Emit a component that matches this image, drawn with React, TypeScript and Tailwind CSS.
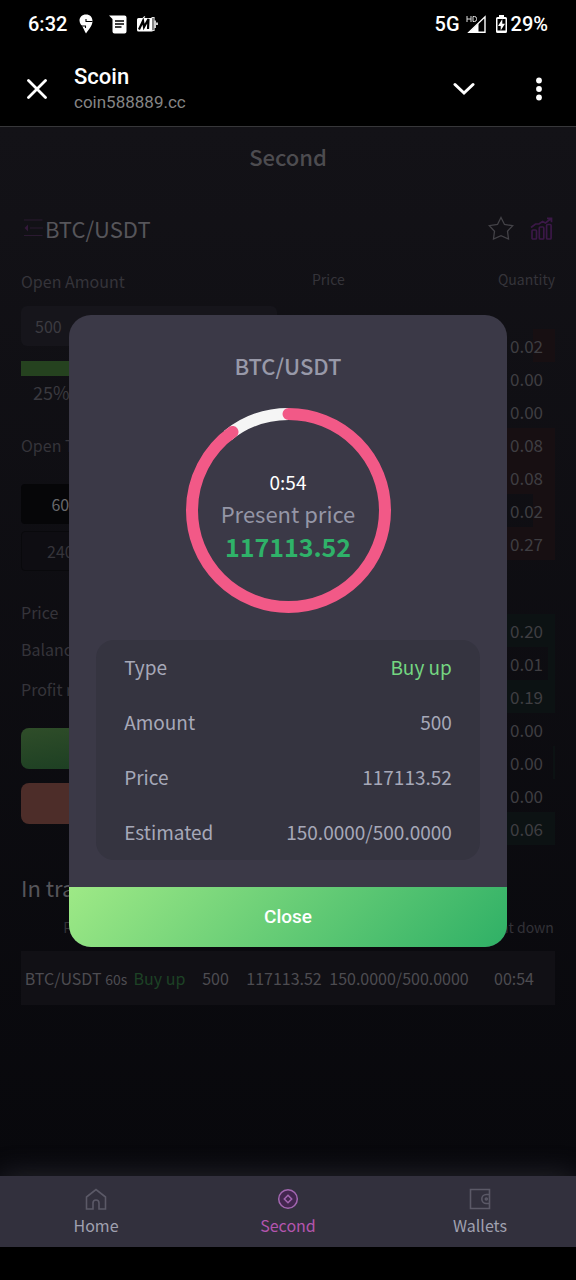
import React from "react";

type Level = { qty: string; depth: number };

const asks: Level[] = [
  { qty: "0.02", depth: 22 },
  { qty: "0.00", depth: 0 },
  { qty: "0.00", depth: 0 },
  { qty: "0.08", depth: 90 },
  { qty: "0.08", depth: 90 },
  { qty: "0.02", depth: 22 },
  { qty: "0.27", depth: 240 },
];

const bids: Level[] = [
  { qty: "0.20", depth: 200 },
  { qty: "0.01", depth: 7 },
  { qty: "0.19", depth: 190 },
  { qty: "0.00", depth: 0 },
  { qty: "0.00", depth: 2 },
  { qty: "0.00", depth: 0 },
  { qty: "0.06", depth: 60 },
];

const details = [
  { label: "Type", value: "Buy up", tone: "text-[#74d681]" },
  { label: "Amount", value: "500", tone: "text-[#a6a8b8]" },
  { label: "Price", value: "117113.52", tone: "text-[#a6a8b8]" },
  { label: "Estimated", value: "150.0000/500.0000", tone: "text-[#a6a8b8]" },
];

function StatusBar() {
  return (
    <div className="flex h-12 items-center justify-between px-7 font-[Roboto,sans-serif] text-[20px] leading-6 font-medium text-white">
      <div className="flex items-center">
        <span>6:32</span>
        <svg className="ml-3 h-5 w-3.5" viewBox="0 0 14 20" aria-hidden="true">
          <path d="M7 .5C3 .5.5 3.200.5 6.500c0 3 2 4.500 3.200 6.500 1 1.800 1.800 4 3.300 6.500 3-4.500 6.500-8 6.500-12.500C13.500 3.200 11 .5 7 .5z" fill="#fff" />
          <path d="M7 5v2.500h6.500M1.500 12h5v2" fill="none" stroke="#000" strokeWidth="1.100" />
        </svg>
        <svg className="ml-4 h-[19px] w-[18px]" viewBox="0 0 18 19" aria-hidden="true">
          <path d="M0 .5h15.500a2 2 0 0 1 2 2v14a2 2 0 0 1-2 2h-10a2 2 0 0 1-2-2V4z" fill="#fff" />
          <path d="M6 6h9M6 9h9M6 12h6.500" stroke="#000" strokeWidth="1.400" />
        </svg>
        <svg className="ml-2.5 h-4 w-[21px]" viewBox="0 0 21 16" aria-hidden="true">
          <path d="M1.500 2h14v13.500h-14a1.500 1.500 0 0 1-1.500-1.500V3.500A1.500 1.500 0 0 1 1.500 2z" fill="#fff" />
          <path d="M2 13.500 6 5l1 6L11.500 3 11 13" fill="none" stroke="#000" strokeWidth="2.200" />
          <path d="M6 2 8 .5M14.500 1.500h2.500v13h-2.500" fill="none" stroke="#ddd" strokeWidth="1.200" />
          <path d="M17 4.500h2v2h2v2.500h-2v3h-2z" fill="#ccc" />
        </svg>
      </div>
      <div className="flex items-center">
        <span>5G</span>
        <svg className="ml-1.5 h-[18px] w-5" viewBox="0 0 20 18" aria-hidden="true">
          <path d="M1 1v6M5 1v6M1 4h4M7 1.500v5h1.500a2 2 0 0 0 2-2v-1a2 2 0 0 0-2-2z" fill="none" stroke="#ddd" strokeWidth="1" />
          <path d="M3 17.200 19 1.800v15.400z" fill="none" stroke="#fff" strokeWidth="1.400" />
          <path d="M3 17.500 12.500 8.500v9z" fill="#fff" />
        </svg>
        <svg className="ml-2.5 h-[18px] w-[11px]" viewBox="0 0 11 18" aria-hidden="true">
          <path d="M3 0h5v2h1.500A1.500 1.500 0 0 1 11 3.500v13A1.500 1.500 0 0 1 9.500 18h-8A1.500 1.500 0 0 1 0 16.500v-13A1.500 1.500 0 0 1 1.500 2H3z" fill="#fff" />
          <path d="M1.500 4h8v11.500h-8z" fill="#000" />
          <path d="M6.300 4 2 11h2.700v4.500L9 8.800H6.300z" fill="#fff" />
        </svg>
        <span className="ml-1">29%</span>
      </div>
    </div>
  );
}

function BrowserBar() {
  return (
    <header className="flex h-[79px] items-center border-b border-[#37373a] px-6 pt-1 font-[Roboto,sans-serif]">
      <button type="button" aria-label="Close tab" className="flex w-[26px] items-center justify-center">
        <svg className="size-5" viewBox="0 0 20 20" aria-hidden="true">
          <path d="m1.500 1.500 17 17m0-17-17 17" stroke="#fff" strokeWidth="2.800" strokeLinecap="round" />
        </svg>
      </button>
      <div className="ml-6 flex-1">
        <h1 className="text-[22px] leading-[26px] font-medium text-white">Scoin</h1>
        <p className="text-[17px] leading-6 text-[#858585]">coin588889.cc</p>
      </div>
      <button type="button" aria-label="Collapse" className="flex size-7 items-center justify-center">
        <svg className="h-3.5 w-[22px]" viewBox="0 0 22 14" aria-hidden="true">
          <path d="m2 2.500 9 8.500 9-8.500" fill="none" stroke="#fff" strokeWidth="3" strokeLinecap="round" />
        </svg>
      </button>
      <button type="button" aria-label="More options" className="ml-12 flex h-7 w-[26px] items-center justify-center">
        <svg className="h-6 w-1.5" viewBox="0 0 6 24" aria-hidden="true">
          <g fill="#fff">
            <circle cx="3" cy="3.500" r="2.900" />
            <circle cx="3" cy="12" r="2.900" />
            <circle cx="3" cy="20.500" r="2.900" />
          </g>
        </svg>
      </button>
    </header>
  );
}

function DepthRows({ levels, bar }: { levels: Level[]; bar: string }) {
  return (
    <ul>
      {levels.map((l, i) => (
        <li key={i} className="relative h-[33px] overflow-hidden">
          <span className={`absolute inset-y-0 right-0 ${bar}`} style={{ width: l.depth }} />
          <span className="relative block pr-3 text-right text-[17px] leading-[33px] text-[#3f3e42]">{l.qty}</span>
        </li>
      ))}
    </ul>
  );
}

function OrderForm() {
  return (
    <form className="w-[48%] text-[16px] leading-6 text-[#35343a]">
      <label htmlFor="amount" className="block pt-2">Open Amount</label>
      <input
        id="amount"
        defaultValue="500"
        className="mt-[13px] block h-10 w-full rounded-md bg-[#16151b] px-3.5 text-[#3c3b41] outline-none"
      />
      <div className="mt-[15px] h-[15px] bg-[#25421f]" />
      <p className="mt-0.5 pl-3 text-[18px] leading-7 text-[#3a393f]">25%</p>
      <p className="mt-[27px]">Open Time</p>
      <div className="mt-[27px] grid grid-cols-2 gap-x-3 gap-y-[7px]">
        <button type="button" className="h-10 rounded-sm bg-[#060608] pr-9 text-center text-[#69696c]">60s</button>
        <span />
        <button type="button" className="h-10 rounded-sm border border-[#09090c] bg-[#0e0d12] pr-9 text-center">240s</button>
      </div>
      <p className="mt-[29px]">Price</p>
      <p className="mt-[13px]">Balance</p>
      <p className="mt-4">Profit rate</p>
      <button type="button" aria-label="Buy up" className="mt-[27px] block h-[41px] w-full rounded-lg bg-linear-to-br from-[#2f4d29] to-[#10371f]" />
      <button type="button" aria-label="Buy down" className="mt-[14px] block h-[41px] w-full rounded-lg bg-[#4d2d29]" />
    </form>
  );
}

function OrderBook() {
  return (
    <div className="w-[243px]">
      <div className="flex justify-between pt-2 text-[14px] leading-5 text-[#35343a]">
        <span>Price</span>
        <span>Quantity</span>
      </div>
      <div className="mt-10">
        <DepthRows levels={asks} bar="bg-[#170f12]" />
      </div>
      <div className="mt-[54px]">
        <DepthRows levels={bids} bar="bg-[#0c1213]" />
      </div>
    </div>
  );
}

function Positions() {
  return (
    <section className="mt-[26px]">
      <h2 className="text-[22px] leading-8 text-[#56555a]">In transaction</h2>
      <table className="mt-2 w-full table-fixed border-collapse text-center whitespace-nowrap">
        <colgroup>
          <col className="w-[110px]" />
          <col className="w-[57px]" />
          <col className="w-[55px]" />
          <col className="w-[82px]" />
          <col />
          <col className="w-[82px]" />
        </colgroup>
        <thead>
          <tr className="h-10 text-[14px] leading-5 text-[#333238]">
            <th scope="col" className="p-0 pb-2 font-normal">Pair</th>
            <td /><td /><td /><td />
            <th scope="col" className="p-0 pb-2 font-normal">Count down</th>
          </tr>
        </thead>
        <tbody>
          <tr className="h-[54px] bg-[#111015] text-[16px] text-[#4d4c51]">
            <td className="p-0">BTC/USDT <small className="text-[14px]">60s</small></td>
            <td className="p-0 text-[#1d4225]">Buy up</td>
            <td className="p-0">500</td>
            <td className="p-0">117113.52</td>
            <td className="p-0">150.0000/500.0000</td>
            <td className="p-0">00:54</td>
          </tr>
        </tbody>
      </table>
    </section>
  );
}

function TradePage() {
  return (
    <div className="px-[21px]">
      <h2 className="pt-[13px] text-center text-[22px] leading-8 font-medium text-[#4d4c50]">Second</h2>
      <div className="mt-10 flex h-8 items-center pr-0.5">
        <svg className="ml-[3px] h-[18px] w-[19px] shrink-0" viewBox="0 0 19 18" fill="none" stroke="#2b1a31" aria-hidden="true">
          <path d="M0 1h18.500M6 9h13M0 16.500h18.500" />
          <path d="M4 5.500v7L.5 9z" fill="#33193a" stroke="none" />
        </svg>
        <h3 className="ml-0.5 flex-1 text-[22px] leading-8 text-[#56555a]">BTC/USDT</h3>
        <svg className="h-6 w-[26px]" viewBox="0 0 26 24" fill="none" stroke="#434247" strokeWidth="1.300" aria-hidden="true">
          <path d="m13 1.500 3.500 7 8.200 1.200-5.200 5.500 1 7.800-7.500-3.300-7.500 3.300 1-7.800L1.300 9.700l8.200-1.200z" />
        </svg>
        <svg className="ml-4 h-[23px] w-[23px]" viewBox="0 0 23 23" fill="none" stroke="#3b1847" strokeWidth="1.700" aria-hidden="true">
          <rect x="2" y="13" width="4.500" height="9" rx="1" />
          <rect x="9.300" y="10" width="4.500" height="12" rx="1" />
          <rect x="16.600" y="7.500" width="4.500" height="14.500" rx="1" />
          <path d="M1 10.500 5.500 7h3.500l3.500-2.500L15.500 6l5-4M17 1.300h4.500v4" />
        </svg>
      </div>
      <div className="mt-[17px] flex justify-between">
        <OrderForm />
        <OrderBook />
      </div>
      <Positions />
    </div>
  );
}

function Countdown() {
  const r = 96.5;
  const length = 2 * Math.PI * r;
  return (
    <div className="mx-auto mt-[25px] grid size-[205px] place-items-center">
      <svg className="col-start-1 row-start-1 size-full -rotate-90" viewBox="0 0 205 205" fill="none" strokeWidth="12" aria-hidden="true">
        <circle cx="102.5" cy="102.5" r={r} stroke="#f5f5f5" strokeDasharray={`0 ${length * 0.89} ${length * 0.11}`} />
        <circle cx="102.5" cy="102.5" r={r} stroke="#f25987" strokeLinecap="round" strokeDasharray={`${length * 0.9} ${length}`} />
      </svg>
      <div className="col-start-1 row-start-1 pt-2 text-center">
        <p className="text-[19px] leading-[30px] text-white">0:54</p>
        <p className="text-[22px] leading-8 text-[#9596a6]">Present price</p>
        <p className="text-[25px] leading-[34px] font-bold text-[#2fb269]">117113.52</p>
      </div>
    </div>
  );
}

function TradeDialog() {
  return (
    <div className="absolute inset-0 flex items-start justify-center pt-[188px]">
      <div role="dialog" aria-labelledby="pair" className="w-[76%] overflow-hidden rounded-[22px] bg-[#3b3947]">
        <h2 id="pair" className="pt-8 text-center text-[22px] leading-9 font-medium text-[#9899a9]">BTC/USDT</h2>
        <Countdown />
        <dl className="mx-[27px] my-[27px] rounded-[18px] bg-[#353440] px-7 text-[19px] text-[#a6a8b8]">
          {details.map((d) => (
            <div key={d.label} className="flex h-[55px] items-center justify-between">
              <dt>{d.label}</dt>
              <dd className={d.tone}>{d.value}</dd>
            </div>
          ))}
        </dl>
        <button
          type="button"
          className="h-[60px] w-full bg-linear-[135deg] from-[#9ee986] to-[#2fb066] font-[Roboto,sans-serif] text-[19px] font-medium text-white"
        >
          Close
        </button>
      </div>
    </div>
  );
}

function TabBar() {
  const item = "flex flex-1 flex-col items-center pt-3 text-[16px] leading-6";
  return (
    <nav className="relative flex h-[71px] bg-[#32303d] text-[#a0a1b0] shadow-[0_0_30px_rgba(120,120,140,0.28)]">
      <a href="#home" className={item}>
        <svg className="size-[22px]" viewBox="0 0 22 22" fill="none" stroke="#5b5967" strokeWidth="1.600" aria-hidden="true">
          <path d="M1.500 9 11 1.500 20.500 9v12H14v-6a3 3 0 0 0-6 0v6H1.500z" />
        </svg>
        <span className="mt-[3px]">Home</span>
      </a>
      <a href="#second" className={`${item} text-[#b455ae]`}>
        <svg className="size-[22px]" viewBox="0 0 22 22" fill="none" stroke="#a266b0" strokeWidth="1.500" aria-hidden="true">
          <circle cx="11" cy="11" r="9.300" fill="#43264f" />
          <path d="M11 7.300 14.700 11 11 14.700 7.300 11z" />
        </svg>
        <span className="mt-[3px]">Second</span>
      </a>
      <a href="#wallets" className={item}>
        <svg className="size-[22px]" viewBox="0 0 22 22" fill="none" stroke="#5b5967" strokeWidth="1.600" aria-hidden="true">
          <path d="M1.500 1.500h19v19h-19z" />
          <path d="M20.500 6.500h-3.200a4.500 4.500 0 0 0 0 9h3.200" />
          <circle cx="17.300" cy="11" r="1" />
        </svg>
        <span className="mt-[3px]">Wallets</span>
      </a>
    </nav>
  );
}

export default function App() {
  return (
    <div className="flex min-h-screen flex-col bg-black font-['Noto_Sans_CJK_SC',sans-serif]">
      <StatusBar />
      <BrowserBar />
      <main className="relative flex-1 bg-linear-to-b from-[#131217] to-[#08080c]">
        <TradePage />
        <TradeDialog />
      </main>
      <TabBar />
      <div className="relative h-[33px] bg-black" />
    </div>
  );
}
